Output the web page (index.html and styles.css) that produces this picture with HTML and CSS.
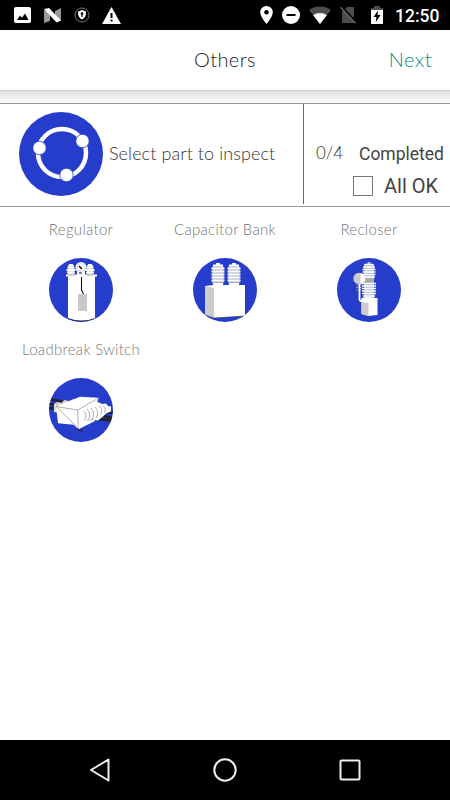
FILE: index.html
```
<!DOCTYPE html>
<html lang="en">
<head>
    <meta charset="UTF-8">
    <meta name="viewport" content="width=device-width, initial-scale=1.0">
    <title>Others</title>
    <link rel="stylesheet" href="styles.css">
</head>
<body>
    <div class="status-bar">
        <div class="status-left">
            <svg width="17" height="16" viewBox="0 0 17 16"><rect width="17" height="16" rx="2" fill="#fff"/><path d="M3 13l3-4.500 2 2.300 3-4.300L14.500 13z" fill="#000"/></svg>
            <svg width="19" height="15" viewBox="0 0 19 15"><path d="M1 2l6 3v8l-6 2zM18 0v13l-6-3V3z" fill="#999"/><path d="M1 1l5-1 12 12.500-4.500 2z" fill="#fff"/></svg>
            <svg width="16" height="16" viewBox="0 0 16 16"><circle cx="8" cy="8" r="7" fill="none" stroke="#777"/><path d="M8 3c2 1 3 1.200 4 1.200 0 4-.5 6.300-4 8.300-3.500-2-4-4.300-4-8.300 1 0 2-.2 4-1.200z" fill="#fff"/><circle cx="8" cy="6.500" r="1.300"/><path d="M7.400 7h1.200v3H7.400z"/></svg>
            <svg width="19" height="17" viewBox="0 0 19 17"><path d="M9.500 0L19 17H0z" fill="#fff"/><path d="M8.500 6h2v5h-2zM8.500 12.500h2v2h-2z"/></svg>
        </div>
        <div class="status-right">
            <svg width="13" height="18" viewBox="0 0 13 18"><path d="M6.500 0A6.300 6.300 0 0 0 .2 6.300C.2 11 6.500 18 6.500 18s6.300-7 6.300-11.700A6.300 6.300 0 0 0 6.500 0z" fill="#fff"/><circle cx="6.500" cy="6.300" r="2.200"/></svg>
            <svg width="18" height="18" viewBox="0 0 18 18"><circle cx="9" cy="9" r="9" fill="#fff"/><path d="M4.500 8h9v2h-9z"/></svg>
            <svg width="22" height="18" viewBox="0 0 22 18"><path d="M0 4C6-.7 16-.7 22 4L11 18z" fill="#4d4d4d"/><path d="M4.200 9.200c4-3 9.600-3 13.600 0L11 18z" fill="#fff"/></svg>
            <svg width="17" height="18" viewBox="0 0 17 18"><path d="M2 6l5-5h7v16H2z" fill="#4d4d4d"/><path d="M1.500.5l15 16" stroke="#000" stroke-width="2"/><path d="M.5 1.200l15 16" stroke="#666" stroke-width="1.300"/></svg>
            <svg width="12" height="18" viewBox="0 0 12 18"><path d="M3 0h6v2h3v3H0V2h3z" fill="#4d4d4d"/><path d="M0 4h12v14H0z" fill="#fff"/><path d="M7 4.500L2.500 11H5.400L4.800 16 9.600 9H6.500z"/></svg>
            <span class="clock">12:50</span>
        </div>
    </div>

    <header class="header">
        <h1>Others</h1>
        <a class="next">Next</a>
    </header>
    <div class="header-shadow"></div>

    <section class="summary">
        <div class="select-part">
            <svg width="84" height="84" viewBox="0 0 84 84">
                <circle cx="42" cy="42" r="42" fill="#263ccb"/>
                <circle cx="43" cy="41" r="24" fill="none" stroke="#fff" stroke-width="4.500"/>
                <g fill="#fff" stroke="#263ccb" stroke-width=".8">
                    <circle cx="20.500" cy="36" r="6.700"/>
                    <circle cx="63.500" cy="29" r="6.700"/>
                    <circle cx="47.500" cy="63" r="6.700"/>
                </g>
            </svg>
            <span class="select-text">Select part to inspect</span>
        </div>
        <div class="progress">
            <div class="progress-row">
                <span class="count">0/4</span>
                <span class="completed">Completed</span>
            </div>
            <div class="check-row">
                <span class="checkbox"></span>
                <span class="all-ok">All OK</span>
            </div>
        </div>
    </section>

    <main class="parts">
        <div class="part">
            <span class="part-name">Regulator</span>
            <svg width="64" height="64" viewBox="0 0 64 64">
                <defs><clipPath id="round"><circle cx="32" cy="32" r="32"/></clipPath></defs>
                <g clip-path="url(#round)">
                    <rect width="64" height="64" fill="#263ccb"/>
                    <path d="M19 18h27v42q-13 5-27 0z" fill="#fff"/>
                    <path d="M19 61q13 5 27 0" fill="none" stroke="#222" stroke-width=".8"/>
                    <path d="M17 16.500h31v2H17z" fill="#fff"/>
                    <path d="M19 7h6v11h-6zM38 7h6v11h-6z" fill="#ccc"/>
                    <path d="M20 7h4M18.500 9.500h7M17.500 12h9M18 14.500h8M39 7h4M37.500 9.500h7M36.500 12h9M37 14.500h8" stroke="#fff" stroke-width="1.800"/>
                    <circle cx="32" cy="9.500" r="5.500" fill="#fff"/>
                    <circle cx="32" cy="9.500" r="4" fill="none" stroke="#bbb" stroke-width=".6"/>
                    <path d="M28 14h8v4h-8z" fill="#fff"/>
                    <path d="M30 8l3 3" stroke="#111" stroke-width="1.600"/>
                    <path d="M30 15h3M32.500 19v13l2 4" fill="none" stroke="#111" stroke-width="1.100"/>
                    <path d="M29 36h9v17h-9z" fill="#c8c8c8"/>
                </g>
            </svg>
        </div>
        <div class="part">
            <span class="part-name">Capacitor Bank</span>
            <svg width="64" height="64" viewBox="0 0 64 64">
                <g clip-path="url(#round)">
                    <rect width="64" height="64" fill="#263ccb"/>
                    <path d="M23 5h4v3h-4zM39 5h4v3h-4z" fill="#fff"/>
                    <path d="M19.500 8h11v18h-11zM35.500 8h11v18h-11z" fill="#aab0cf"/>
                    <path d="M20 7.500h10M18.500 10.500h13M18.500 13.500h13M18.500 16.500h13M18.500 19.500h13M18.500 22.500h13M36 7.500h10M34.500 10.500h13M34.500 13.500h13M34.500 16.500h13M34.500 19.500h13M34.500 22.500h13" stroke="#fff" stroke-width="2"/>
                    <path d="M20 25h10v3H20zM36 25h10v3H36z" fill="#fff"/>
                    <path d="M12 28l9-1h31v31l-31 2-9-3z" fill="#fff"/>
                    <path d="M12 28l9 2v30l-9-3z" fill="#ccc"/>
                    <path d="M12 57l9 3 31-2" fill="none" stroke="#333" stroke-width=".6"/>
                </g>
            </svg>
        </div>
        <div class="part">
            <span class="part-name">Recloser</span>
            <svg width="64" height="64" viewBox="0 0 64 64">
                <g clip-path="url(#round)">
                    <rect width="64" height="64" fill="#263ccb"/>
                    <path d="M30.500 4h3v3h-3z" fill="#bbb"/>
                    <path d="M27 6h10v34H27z" fill="#b5b9cc"/>
                    <path d="M27.500 6.500h9M26 9h12M25.500 11.500h13M25.500 14h13M25.500 16.500h13M26 19h12M25 25.500h14M25 28h14M25 30.500h14M25 33h14M25 35.500h14M26 38h12" stroke="#fff" stroke-width="1.600"/>
                    <path d="M28 20.500h8v4h-8z" fill="#aaa"/>
                    <path d="M19 27h6M19 29.500h6M19 32h6" stroke="#aaa" stroke-width=".7"/>
                    <circle cx="22" cy="20.500" r="5.700" fill="#ccc"/>
                    <path d="M23.500 15v11q4.500-1 4.500-5.500T23.500 15z" fill="#fff"/>
                    <path d="M22.500 26v15q0 2 2 2h3" fill="none" stroke="#fff" stroke-width="1.800"/>
                    <path d="M24.500 40l5-1 11 1v17l-9 1-7-2z" fill="#fff"/>
                    <path d="M24.500 44l7 1v13l-7-2z" fill="#ccc"/>
                </g>
            </svg>
        </div>
        <div class="part">
            <span class="part-name">Loadbreak Switch</span>
            <svg width="64" height="64" viewBox="0 0 64 64">
                <g clip-path="url(#round)">
                    <rect width="64" height="64" fill="#263ccb"/>
                    <path d="M1 21.500l17 2.500M0 26l14 2M0 30l12 1M48 41l16 1.500M53 35l11-.5M54 38l10 2" stroke="#222" stroke-width="2.500"/>
                    <path d="M5 26l3-2 5 1 2-3 5 1 5-2v10L10 35l-5-1z" fill="#ddd"/>
                    <path d="M8 25l2 8M13 23l2 7M18 22l1 5" stroke="#999" stroke-width=".6"/>
                    <path d="M34 30l15-6 4 2 4-.5 2 2.500 3 .5v5l-5 2-3 3-5 4-6-1-10 2z" fill="#fff"/>
                    <path d="M35 33q4 5 0 9M38 31q5 6 1 11M42 30q5 6 1 11M46 29q5 5 1 11M50 28q5 4 1 9M54 28q4 3 1 7" fill="none" stroke="#999" stroke-width=".8"/>
                    <path d="M7 28.500l24-9.800 18.500 1L48 25 34 31v12l12-1.500v1.500l-16.500 8.300-5-4.500-15.500-1.500z" fill="#fff"/>
                    <path d="M7 28.500l21.700 3.500L49.500 20M28.700 32l.6 19M7 28.500L28 49" fill="none" stroke="#888" stroke-width=".7"/>
                    <path d="M28 50l3 3q3 1 2-2" fill="none" stroke="#222"/>
                </g>
            </svg>
        </div>
    </main>

    <nav class="nav-bar">
        <svg width="24" height="24" viewBox="0 0 24 24"><path d="M20.500 1.500v21L3 12z"/></svg>
        <svg width="24" height="24" viewBox="0 0 24 24"><circle cx="12" cy="12" r="10.700"/></svg>
        <svg width="24" height="24" viewBox="0 0 24 24"><rect x="2.500" y="2.500" width="19" height="19" rx="1"/></svg>
    </nav>
</body>
</html>
```
FILE: styles.css
```
* {
    margin: 0;
    padding: 0;
    box-sizing: border-box;
}

body {
    display: flex;
    flex-direction: column;
    height: 100vh;
    background: #fff;
    color: #333;
    font-family: Lato, sans-serif;
    font-weight: 300;
    overflow: hidden;
}

svg {
    display: block;
    flex-shrink: 0;
}

.status-bar {
    display: flex;
    justify-content: space-between;
    height: 30px;
    padding: 0 10px 0 14px;
    background: #000;
}

.status-left,
.status-right {
    display: flex;
    align-items: center;
    gap: 12px;
}

.status-right {
    gap: 9px;
}

.status-right svg:nth-child(5) {
    margin-left: 5px;
}

.clock {
    width: 45px;
    margin-left: 3px;
    padding-top: 1px;
    color: #fff;
    font: 500 17.5px/30px Roboto, sans-serif;
    white-space: nowrap;
}

.header {
    display: grid;
    grid-template-columns: 1fr auto 1fr;
    align-items: center;
    height: 60px;
    padding-bottom: 2px;
    flex-shrink: 0;
}

.header h1 {
    grid-column: 2;
    color: #222;
    font-size: 20px;
    font-weight: 300;
    letter-spacing: 0.4px;
}

.next {
    justify-self: end;
    margin-right: 18px;
    color: #008f7c;
    font-size: 20px;
    letter-spacing: 0.5px;
}

.header-shadow {
    height: 13px;
    border-top: 1px solid #c8cbca;
    background: linear-gradient(#e2e2e2, #fafafa);
    flex-shrink: 0;
}

.summary {
    display: flex;
    height: 104px;
    border-top: 1px solid #999;
    border-bottom: 1px solid #999;
    flex-shrink: 0;
}

.select-part {
    display: flex;
    align-items: center;
    width: 304px;
    height: 100px;
    padding-left: 19px;
    border-right: 1px solid #666;
}

.select-text {
    margin: -2px 0 0 6px;
    font-size: 18px;
    letter-spacing: 0.08px;
    white-space: nowrap;
}

.progress {
    display: flex;
    flex-direction: column;
    padding: 37px 0 0 12px;
}

.progress-row {
    display: flex;
    align-items: center;
    height: 25px;
    white-space: nowrap;
}

.count {
    width: 43px;
    margin-top: -3px;
    font-size: 17px;
}

.completed {
    padding-top: 1px;
    color: #444;
    font: 400 17.5px Roboto, sans-serif;
}

.check-row {
    display: flex;
    align-items: center;
    height: 39px;
    padding-left: 37px;
}

.checkbox {
    width: 20px;
    height: 20px;
    border: 1px solid #777;
}

.all-ok {
    margin: 1px 0 0 11px;
    color: #444;
    font: 400 20px Roboto, sans-serif;
}

.parts {
    display: grid;
    grid-template-columns: repeat(3, 144px);
    grid-auto-rows: 120px;
    align-content: start;
    flex: 1;
    padding: 10px 9px 0;
}

.part {
    display: flex;
    flex-direction: column;
    align-items: center;
}

.part-name {
    height: 41px;
    color: #777;
    font-size: 15px;
    line-height: 24px;
    letter-spacing: 0.3px;
    white-space: nowrap;
}

.nav-bar {
    display: flex;
    justify-content: space-between;
    align-items: center;
    height: 60px;
    padding: 0 88px;
    background: #000;
}

.nav-bar svg {
    fill: none;
    stroke: #eee;
    stroke-width: 2;
    stroke-linejoin: round;
}
```
